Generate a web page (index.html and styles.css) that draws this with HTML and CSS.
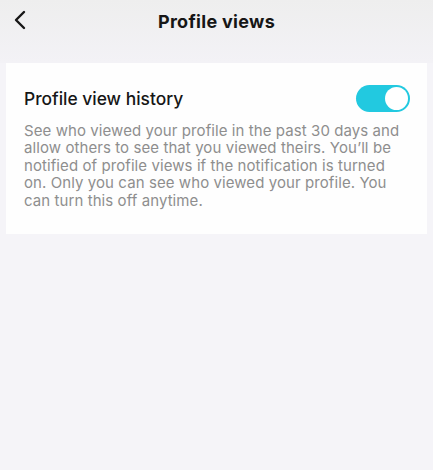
FILE: index.html
```html
<!DOCTYPE html>
<html lang="en">
<head>
  <meta charset="UTF-8">
  <meta name="viewport" content="width=device-width, initial-scale=1.0">
  <title>Profile views</title>
  <link rel="stylesheet" href="styles.css">
</head>
<body>
  <div class="topbar">
    <button class="back" aria-label="Back">
      <svg width="14" height="20" viewBox="0 0 14 20"><path d="M11 2 L3 10 L11 18" fill="none" stroke="#161616" stroke-width="2.4" stroke-linecap="round" stroke-linejoin="round"/></svg>
    </button>
    <h1>Profile views</h1>
  </div>

  <div class="card">
    <div class="card-head">
      <h2>Profile view history</h2>
      <span class="toggle on"><span class="knob"></span></span>
    </div>
    <p class="desc">See who viewed your profile in the past 30 days and allow others to see that you viewed theirs. You’ll be notified of profile views if the notification is turned on. Only you can see who viewed your profile. You can turn this off anytime.</p>
  </div>
</body>
</html>
```
FILE: styles.css
```css
body {
  margin: 0;
  font-family: Inter, "Liberation Sans", Arial, sans-serif;
  background: #f5f4f8;
  height: 470px;
}
.topbar {
  position: relative;
  height: 40px;
  display: flex;
  align-items: center;
  justify-content: center;
  background: linear-gradient(#eeeeee, #f3f2f6);
  padding-bottom: 23px;
}
.back {
  position: absolute;
  left: 13px;
  top: 10px;
  border: 0;
  background: none;
  padding: 0;
}
.topbar h1 {
  margin: 0;
  padding-top: 3px;
  font-size: 18px;
  font-weight: 700;
  letter-spacing: 0.3px;
  color: #161616;
}
.card {
  margin: 0 6px;
  background: #fefefe;
  padding: 22px 17px 25px 18px;
}
.card-head {
  display: flex;
  justify-content: space-between;
  align-items: center;
  margin-bottom: 10px;
}
.card-head h2 {
  margin: 0;
  font-size: 17.4px;
  font-weight: 500;
  color: #161616;
}
.toggle {
  width: 54px;
  height: 27px;
  border-radius: 14px;
  background: #cfcfd3;
  display: flex;
  align-items: center;
  padding: 0 2px;
  box-sizing: border-box;
}
.toggle.on {
  background: #22c9e0;
  justify-content: flex-end;
}
.knob {
  width: 23px;
  height: 23px;
  border-radius: 50%;
  background: #fff;
}
.desc {
  margin: 0;
  font-size: 15px;
  line-height: 17.4px;
  letter-spacing: 0.08px;
  color: #8e8e8e;
}
```
